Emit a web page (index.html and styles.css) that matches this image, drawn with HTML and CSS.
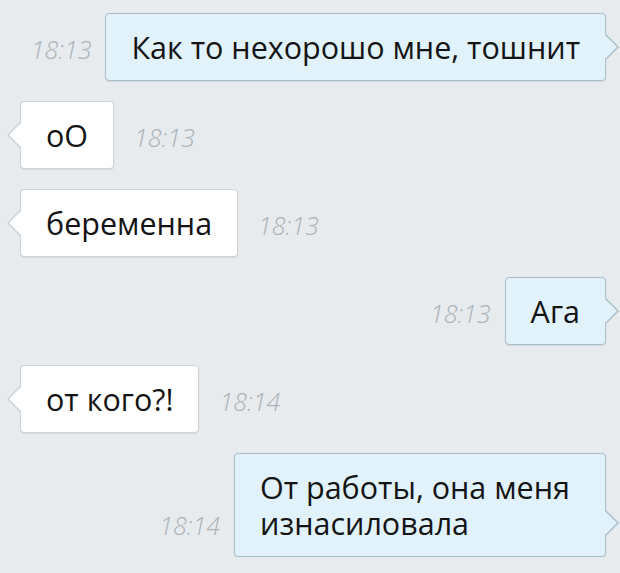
FILE: index.html
```html
<!DOCTYPE html>
<html lang="ru">
<head>
    <meta charset="UTF-8">
    <meta name="viewport" content="width=device-width, initial-scale=1.0">
    <title>Диалог</title>
    <link rel="stylesheet" href="styles.css">
</head>
<body>
    <div class="chat">
        <div class="row out">
            <span class="time">18:13</span>
            <div class="bubble">Как то нехорошо мне, тошнит</div>
        </div>

        <div class="row in">
            <div class="bubble">оО</div>
            <span class="time">18:13</span>
        </div>

        <div class="row in">
            <div class="bubble">беременна</div>
            <span class="time">18:13</span>
        </div>

        <div class="row out">
            <span class="time">18:13</span>
            <div class="bubble">Ага</div>
        </div>

        <div class="row in">
            <div class="bubble">от кого?!</div>
            <span class="time">18:14</span>
        </div>

        <div class="row out">
            <span class="time">18:14</span>
            <div class="bubble wide">От работы, она меня изнасиловала</div>
        </div>
    </div>
</body>
</html>
```

FILE: styles.css
```css
* {
    margin: 0;
    padding: 0;
    box-sizing: border-box;
}

body {
    background: #e8ebee;
    font-family: "Open Sans", "Noto Sans", sans-serif;
    color: #141414;
}

.chat {
    display: flex;
    flex-direction: column;
    gap: 20px;
    padding: 13px 14px 0 20px;
}

.row {
    display: flex;
    align-items: flex-end;
}

.row.out {
    justify-content: flex-end;
    gap: 14px;
}

.row.in {
    gap: 20px;
}

.time {
    font-size: 25px;
    font-style: italic;
    font-weight: 300;
    color: #aab1b8;
    line-height: 30px;
    margin-bottom: 17px;
}

.bubble {
    position: relative;
    font-size: 30.5px;
    line-height: 36px;
    padding: 15px 25px;
    border-radius: 4px;
    border: 1px solid #cdd2d6;
    background: #fff;
    box-shadow: 0 1px 1px rgba(0, 0, 0, 0.08);
}

.bubble.wide {
    max-width: 372px;
}

/* tails */
.bubble::before,
.bubble::after {
    content: "";
    position: absolute;
    width: 0;
    height: 0;
    border-style: solid;
    border-color: transparent;
}

.out .bubble {
    background: #e2f2fa;
    border-color: #a9bdca;
}

.out .bubble::before {
    right: -14px;
    bottom: 19px;
    border-width: 14px 0 14px 14px;
    border-left-color: #a9bdca;
}

.out .bubble::after {
    right: -12px;
    bottom: 20px;
    border-width: 13px 0 13px 13px;
    border-left-color: #e2f2fa;
}

.in .bubble::before {
    left: -14px;
    bottom: 19px;
    border-width: 14px 14px 14px 0;
    border-right-color: #cdd2d6;
}

.in .bubble::after {
    left: -12px;
    bottom: 20px;
    border-width: 13px 13px 13px 0;
    border-right-color: #fff;
}
```
